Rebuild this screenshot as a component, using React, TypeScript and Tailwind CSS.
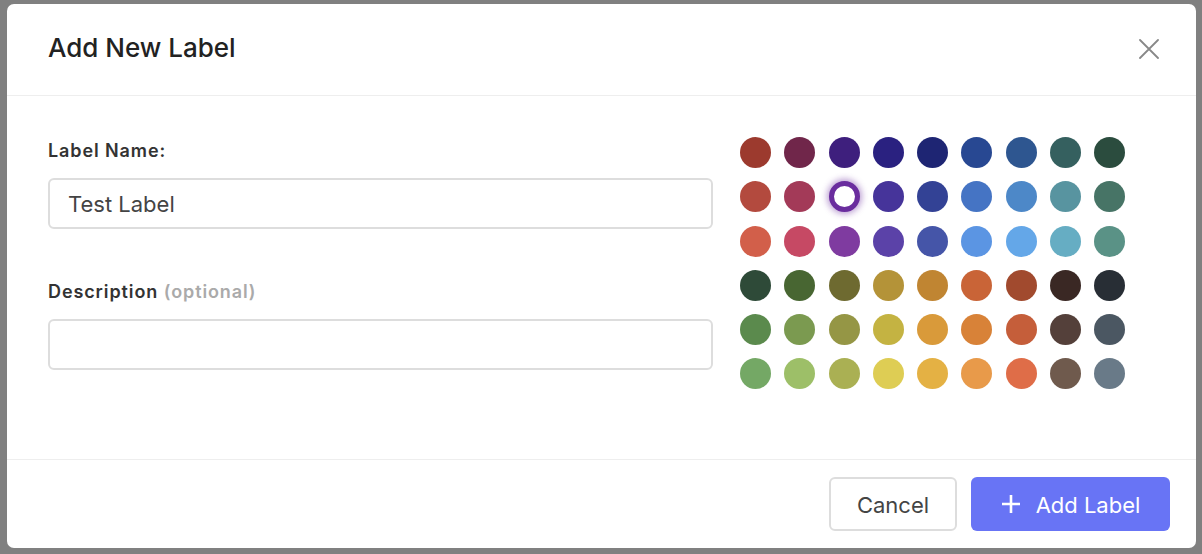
const colors = [
  ['#9c3a2e', '#70264a', '#3e1f7d', '#2a2180', '#1e2573', '#284892', '#2e5690', '#35605f', '#2b4c3e'],
  ['#b34a3e', '#a33a58', '#6a2d9e', '#46349a', '#334295', '#4574c4', '#4d88c8', '#5894a0', '#477466'],
  ['#d25f4a', '#c64964', '#7f3ba0', '#5b42a8', '#4555a8', '#5b95e3', '#64a7e8', '#66adc3', '#5a9286'],
  ['#2e4a38', '#486632', '#6e6a30', '#b49338', '#c08532', '#c96437', '#a14a2e', '#3a2824', '#282e35'],
  ['#5b8a4d', '#7b9a50', '#959645', '#c4b342', '#d99a3a', '#d88238', '#c55e3a', '#54403a', '#4b5762'],
  ['#74a865', '#9dbf68', '#aab053', '#decd54', '#e4b144', '#e89a4a', '#df6d48', '#6f5a4d', '#697a88'],
]

export default function App() {
  const selected = '#6a2d9e'

  return (
    <div className="h-[554px] w-[1202px] bg-[#808080] pt-[4px] pl-[7px]" style={{ fontFamily: 'Inter, "Open Sans", sans-serif' }}>
      <div className="w-[1189px] h-[544px] bg-white rounded-[7px] flex flex-col">
        {/* header */}
        <div className="h-[92px] border-b border-[#eeeeee] flex items-center justify-between pl-[41px] pr-[37px] shrink-0">
          <h1 className="text-[26px] text-[#222] font-medium -mt-[4px]">Add New Label</h1>
          <svg width="20" height="20" viewBox="0 0 20 20" className="-mt-[2px]">
            <path d="M1 1L19 19M19 1L1 19" stroke="#888" strokeWidth="1.8" strokeLinecap="round" />
          </svg>
        </div>

        {/* body */}
        <div className="flex-1 flex pl-[41px] pt-[41px]">
          <div className="w-[665px]">
            <label className="block text-[18px] font-semibold tracking-[0.9px] text-[#333]">Label Name:</label>
            <input
              className="mt-[14px] w-full h-[51px] border-2 border-[#dddddd] rounded-[6px] px-[18px] text-[22px] text-[#444] outline-none"
              defaultValue="Test Label"
            />
            <label className="block text-[18px] font-semibold tracking-[0.9px] text-[#333] mt-[49px]">
              Description <span className="text-[#aaa]">(optional)</span>
            </label>
            <input className="mt-[14px] w-full h-[51px] border-2 border-[#dddddd] rounded-[6px] px-[18px] text-[22px] text-[#444] outline-none" />
          </div>

          <div className="ml-[27px] grid grid-cols-9 gap-[13.3px] content-start">
            {colors.flat().map((c) =>
              c === selected ? (
                <div
                  key={c}
                  className="w-[31px] h-[31px] rounded-full bg-white border-[5px] border-[#6a2d9e] shadow-[0_0_6px_2px_rgba(106,45,158,0.45)]"
                />
              ) : (
                <div key={c} className="w-[31px] h-[31px] rounded-full" style={{ backgroundColor: c }} />
              )
            )}
          </div>
        </div>

        {/* footer */}
        <div className="h-[89px] border-t border-[#eeeeee] flex items-start justify-end gap-[14px] pr-[26px] pt-[17px] shrink-0">
          <button className="w-[128px] h-[54px] border-2 border-[#dddddd] rounded-[6px] text-[22px] text-[#444] bg-white pt-[2px]">
            Cancel
          </button>
          <button className="w-[199px] h-[54px] rounded-[6px] bg-[#6874f5] text-white text-[22px] flex items-center justify-center gap-[15px] pt-[2px]">
            <svg width="20" height="20" viewBox="0 0 20 20" className="-mt-[2px]">
              <path d="M10 1V19M1 10H19" stroke="white" strokeWidth="2.6" />
            </svg>
            Add Label
          </button>
        </div>
      </div>
    </div>
  )
}
